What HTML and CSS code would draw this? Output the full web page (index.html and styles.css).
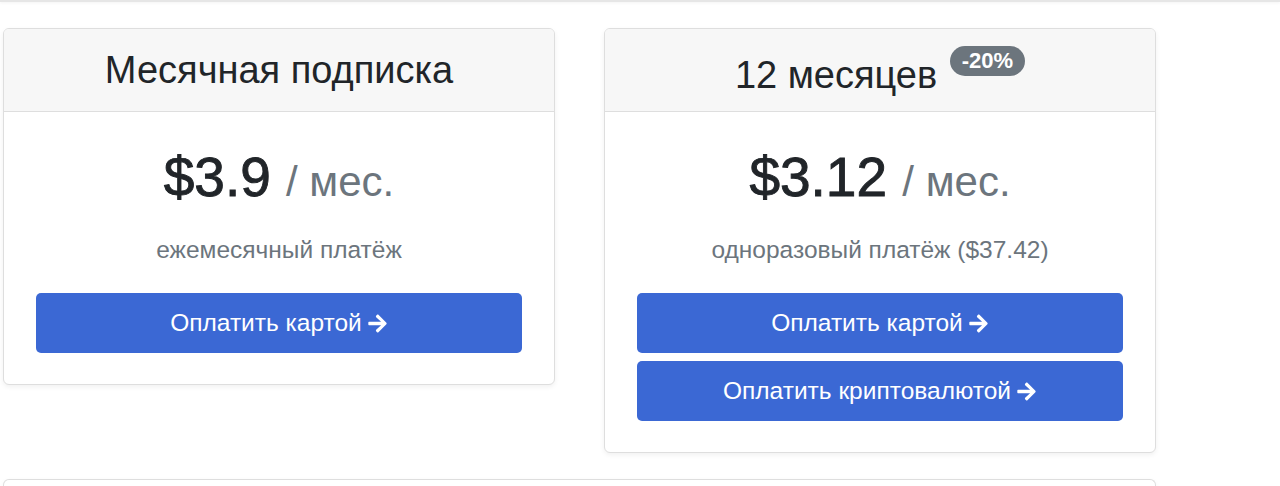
FILE: index.html
```html
<!DOCTYPE html>
<html lang="ru">
<head>
<meta charset="utf-8">
<link rel="stylesheet" href="styles.css">
</head>
<body>
<div class="topbar"></div>
<div class="row">
  <div class="card">
    <div class="card-header"><h4 class="title">Месячная подписка</h4></div>
    <div class="card-body">
      <h1 class="price"><span class="amount">$3.9</span> <small class="per">/ мес.</small></h1>
      <p class="note">ежемесячный платёж</p>
      <a class="btn">Оплатить картой <svg class="arrow" viewBox="0 0 448 512"><path d="M190.5 66.9l22.2-22.2c9.4-9.4 24.6-9.4 33.9 0L441 239c9.4 9.4 9.4 24.6 0 33.9L246.6 467.3c-9.4 9.4-24.6 9.4-33.9 0l-22.2-22.2c-9.5-9.5-9.3-25 .4-34.3L311.4 296H24c-13.3 0-24-10.7-24-24v-32c0-13.3 10.7-24 24-24h287.4L190.9 101.2c-9.8-9.3-10-24.8-.4-34.3z"/></svg></a>
    </div>
  </div>
  <div class="card">
    <div class="card-header"><h4 class="title">12 месяцев <span class="badge">-20%</span></h4></div>
    <div class="card-body">
      <h1 class="price"><span class="amount">$3.12</span> <small class="per">/ мес.</small></h1>
      <p class="note">одноразовый платёж ($37.42)</p>
      <div class="btns">
        <a class="btn">Оплатить картой <svg class="arrow" viewBox="0 0 448 512"><path d="M190.5 66.9l22.2-22.2c9.4-9.4 24.6-9.4 33.9 0L441 239c9.4 9.4 9.4 24.6 0 33.9L246.6 467.3c-9.4 9.4-24.6 9.4-33.9 0l-22.2-22.2c-9.5-9.5-9.3-25 .4-34.3L311.4 296H24c-13.3 0-24-10.7-24-24v-32c0-13.3 10.7-24 24-24h287.4L190.9 101.2c-9.8-9.3-10-24.8-.4-34.3z"/></svg></a>
        <a class="btn">Оплатить криптовалютой <svg class="arrow" viewBox="0 0 448 512"><path d="M190.5 66.9l22.2-22.2c9.4-9.4 24.6-9.4 33.9 0L441 239c9.4 9.4 9.4 24.6 0 33.9L246.6 467.3c-9.4 9.4-24.6 9.4-33.9 0l-22.2-22.2c-9.5-9.5-9.3-25 .4-34.3L311.4 296H24c-13.3 0-24-10.7-24-24v-32c0-13.3 10.7-24 24-24h287.4L190.9 101.2c-9.8-9.3-10-24.8-.4-34.3z"/></svg></a>
      </div>
    </div>
  </div>
</div>
<div class="card card-wide"></div>
</body>
</html>
```
FILE: styles.css
```css
* { box-sizing: border-box; }
html, body { margin: 0; padding: 0; background: #fff; }
body {
  font-family: "Liberation Sans", Arial, sans-serif;
  color: #212529;
  overflow: hidden;
  height: 486px;
}
.topbar {
  height: 2px;
  background: #e6e6e6;
  box-shadow: 0 1px 3px rgba(0,0,0,0.06);
}
.row {
  display: flex;
  align-items: flex-start;
  gap: 49px;
  padding-left: 3px;
  margin-top: 26px;
}
.card {
  width: 552px;
  background: #fff;
  border: 1px solid #dedede;
  border-radius: 6px;
  box-shadow: 0 2px 5px rgba(0,0,0,0.06);
  overflow: hidden;
}
.card-header {
  height: 83px;
  background: #f7f7f7;
  border-bottom: 1px solid #dedede;
  display: flex;
  align-items: center;
  justify-content: center;
}
.title {
  margin: 0;
  font-size: 38px;
  font-weight: normal;
  line-height: 1;
  position: relative;
}
.badge {
  display: inline-block;
  vertical-align: 20px;
  background: #6c757d;
  color: #fff;
  font-size: 22px;
  font-weight: bold;
  height: 30px;
  line-height: 29px;
  padding: 0 12px;
  border-radius: 15px;
  margin-left: 2px;
}
.card-body {
  padding: 32px 32px 31px;
  text-align: center;
}
.price {
  margin: 0;
  font-size: 55px;
  font-weight: normal;
  line-height: 66px;
  color: #212529;
}
.amount {
  -webkit-text-stroke: 0.9px #212529;
}
.per {
  font-size: 42px;
  color: #6c757d;
}
.note {
  margin: 20px 0 28px;
  font-size: 24.5px;
  line-height: 30px;
  color: #6c757d;
}
.btns {
  display: flex;
  flex-direction: column;
  gap: 8px;
}
.btn {
  display: flex;
  align-items: center;
  justify-content: center;
  gap: 5px;
  height: 60px;
  background: #3b68d4;
  color: #fff;
  border-radius: 5px;
  font-size: 24.5px;
}
.arrow {
  width: 21px;
  height: 21px;
  fill: #fff;
}
.card-wide {
  margin: 26px 0 0 3px;
  width: 1153px;
  height: 7px;
  border-bottom: 0;
  border-radius: 6px 6px 0 0;
  background: #fff;
}
```
